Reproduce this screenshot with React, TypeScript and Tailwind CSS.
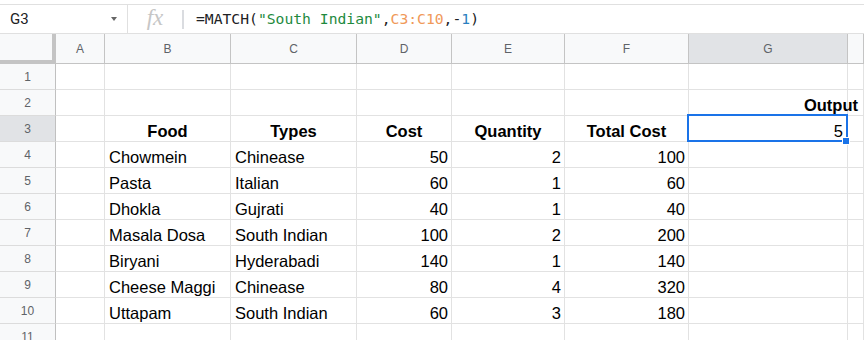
import React from "react";

type Row = { n: number; cells: (string | number)[] };

const rows: Row[] = [
  { n: 4, cells: ["Chowmein", "Chinease", 50, 2, 100] },
  { n: 5, cells: ["Pasta", "Italian", 60, 1, 60] },
  { n: 6, cells: ["Dhokla", "Gujrati", 40, 1, 40] },
  { n: 7, cells: ["Masala Dosa", "South Indian", 100, 2, 200] },
  { n: 8, cells: ["Biryani", "Hyderabadi", 140, 1, 140] },
  { n: 9, cells: ["Cheese Maggi", "Chinease", 80, 4, 320] },
  { n: 10, cells: ["Uttapam", "South Indian", 60, 3, 180] },
];

const columns = ["A", "B", "C", "D", "E", "F", "G", ""];

const RowHead = ({ n, active = false }: { n: number; active?: boolean }) => (
  <div
    className={`h-[26px] flex items-center justify-center border-r border-b border-r-[#c0c0c0] border-b-[#dcdcdc] text-[12px] text-[#5f6368] ${
      active ? "bg-[#e1e3e6]" : "bg-[#f8f9fa]"
    }`}
  >
    {n}
  </div>
);

const Cell = ({
  children,
  align = "left",
  bold = false,
}: {
  children?: React.ReactNode;
  align?: "left" | "right" | "center";
  bold?: boolean;
}) => (
  <div
    className={`h-[26px] border-r border-b border-[#e2e2e2] pt-[4px] leading-[22px] text-[16.5px] text-black whitespace-nowrap overflow-hidden ${
      align === "right" ? "text-right pr-[3px]" : align === "center" ? "text-center" : "text-left pl-[4px]"
    } ${bold ? "font-bold" : ""}`}
  >
    {children}
  </div>
);

const App = () => {
  return (
    <div className="w-[864px] h-[340px] overflow-hidden bg-white font-['Liberation_Sans',Arial,sans-serif]">
      <div className="h-[4px]" />

      {/* Formula bar */}
      <div className="flex h-[30px] border-y border-[#e0e0e0]">
        <div className="w-[128px] flex items-center justify-between pl-[10px] pr-[10px] border-r border-[#e0e0e0] font-['Roboto',sans-serif] text-[15px] text-[#202124]">
          <span>G3</span>
          <svg width="6" height="4" viewBox="0 0 6 4">
            <path d="M0 0h6L3 4z" fill="#666" />
          </svg>
        </div>
        <div className="w-[54px] flex items-center justify-center">
          <span className="font-['Liberation_Serif',serif] italic text-[23px] text-[#c6c6c6] leading-none -mt-[3px]">
            fx
          </span>
        </div>
        <div className="flex items-center">
          <div className="w-[2px] h-[19px] bg-[#dadce0]" />
        </div>
        <div className="flex items-center pl-[12px] font-['DejaVu_Sans_Mono',monospace] text-[14.7px] text-[#202124] whitespace-nowrap">
          <span>=MATCH(</span>
          <span className="text-[#1e8a3e]">"South Indian"</span>
          <span>,</span>
          <span className="text-[#f0995a]">C3:C10</span>
          <span>,-</span>
          <span className="text-[#2a7fc0]">1</span>
          <span>)</span>
        </div>
      </div>

      {/* Grid */}
      <div className="grid grid-cols-[56px_49px_126px_126px_95px_113px_124px_159px_1fr]">
        <div className="h-[30px] bg-[#f8f9fa] border-r-4 border-b-4 border-[#c4c4c4]" />
        {columns.map((c, i) => (
          <div
            key={i}
            className={`h-[30px] flex items-center justify-center border-r border-b border-[#c4c4c4] text-[12px] text-[#5f6368] ${
              c === "G" ? "bg-[#e1e3e6]" : "bg-[#f8f9fa]"
            }`}
          >
            {c}
          </div>
        ))}

        {/* Row 1 */}
        <RowHead n={1} />
        {columns.map((_, i) => (
          <Cell key={i} />
        ))}

        {/* Row 2 */}
        <RowHead n={2} />
        {columns.map((_, i) =>
          i === 6 ? (
            <div
              key={i}
              className="h-[26px] border-r border-b border-[#e2e2e2] pt-[4px] leading-[22px] text-[16.5px] font-bold text-black flex justify-end whitespace-nowrap"
            >
              <span className="-mr-[11px] relative">Output</span>
            </div>
          ) : (
            <Cell key={i} />
          )
        )}

        {/* Row 3 */}
        <RowHead n={3} active />
        <Cell />
        <Cell align="center" bold>Food</Cell>
        <Cell align="center" bold>Types</Cell>
        <Cell align="center" bold>Cost</Cell>
        <Cell align="center" bold>Quantity</Cell>
        <Cell align="center" bold>Total Cost</Cell>
        <div className="relative h-[26px] border-r border-b border-[#e2e2e2] pt-[4px] pr-[4px] leading-[22px] text-[16.5px] text-right text-black">
          5
          <div className="absolute -left-[2px] -top-[2px] -right-[1px] -bottom-[1px] border-2 border-[#1a73e8]" />
          <div className="absolute -right-[3px] -bottom-[4px] w-[8px] h-[8px] bg-[#1a73e8] border border-white" />
        </div>
        <Cell />

        {rows.map((r) => (
          <React.Fragment key={r.n}>
            <RowHead n={r.n} />
            <Cell />
            <Cell>{r.cells[0]}</Cell>
            <Cell>{r.cells[1]}</Cell>
            <Cell align="right">{r.cells[2]}</Cell>
            <Cell align="right">{r.cells[3]}</Cell>
            <Cell align="right">{r.cells[4]}</Cell>
            <Cell />
            <Cell />
          </React.Fragment>
        ))}

        {/* Row 11 */}
        <RowHead n={11} />
        {columns.map((_, i) => (
          <Cell key={i} />
        ))}
      </div>
    </div>
  );
};

export default App;
